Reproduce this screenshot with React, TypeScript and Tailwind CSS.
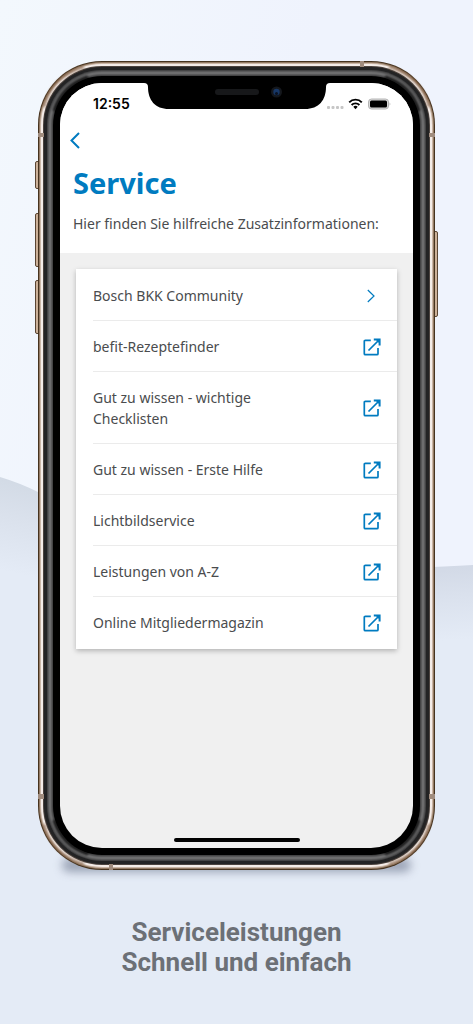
import { useState } from 'react';
import clsx from 'clsx';

interface ServiceEntry { label: string; external: boolean; }

const entries: ServiceEntry[] = [
  { label: 'Bosch BKK Community', external: false },
  { label: 'befit-Rezeptefinder', external: true },
  { label: 'Gut zu wissen - wichtige Checklisten', external: true },
  { label: 'Gut zu wissen - Erste Hilfe', external: true },
  { label: 'Lichtbildservice', external: true },
  { label: 'Leistungen von A-Z', external: true },
  { label: 'Online Mitgliedermagazin', external: true },
];

// rings of the phone body from the outside in
const rings = [
  { inset: 0, radius: 64, fill: '#46331f' },
  { inset: 1, radius: 63, fill: '#937a64' },
  { inset: 2, radius: 62, fill: '#c9b5a5' },
  { inset: 3, radius: 61, fill: '#f4ece8' },
  { inset: 5, radius: 59, fill: '#4a423e' },
  { inset: 6, radius: 58, fill: '#232324' },
  { inset: 9, radius: 55, fill: '#444445' },
  { inset: 10, radius: 54, fill: '#5a5a5b' },
  { inset: 11, radius: 53, fill: '#6d6d6e' },
  { inset: 13, radius: 51, fill: '#585859' },
  { inset: 14, radius: 50, fill: '#444445' },
  { inset: 15, radius: 49, fill: '#000' },
];

function Backdrop() {
  return (
    <svg className="absolute inset-0 w-full h-full" viewBox="0 0 473 1024" preserveAspectRatio="none" aria-hidden="true">
      <defs>
        <linearGradient id="sky" x1="0" y1="0" x2="1" y2="0.6">
          <stop offset="0" stopColor="#f3f8fd" />
          <stop offset="0.5" stopColor="#eff3fd" />
          <stop offset="1" stopColor="#eff3fd" />
        </linearGradient>
        <linearGradient id="waveLeft" gradientUnits="userSpaceOnUse" x1="20" y1="480" x2="0" y2="570">
          <stop offset="0" stopColor="#d2dae5" />
          <stop offset="0.4" stopColor="#dae1ec" />
          <stop offset="1" stopColor="#e4ebf6" />
        </linearGradient>
        <linearGradient id="waveRight" gradientUnits="userSpaceOnUse" x1="450" y1="566" x2="455" y2="640">
          <stop offset="0" stopColor="#d2d9e6" />
          <stop offset="0.4" stopColor="#dae1ed" />
          <stop offset="1" stopColor="#e4ebf6" />
        </linearGradient>
      </defs>
      <rect width="473" height="1024" fill="url(#sky)" />
      <path d="M0 477Q20 483 38 492L236 560V1024H0Z" fill="url(#waveLeft)" />
      <path d="M236 568Q400 570 473 565V1024H236Z" fill="url(#waveRight)" />
    </svg>
  );
}

function PhoneBody() {
  return (
    <svg className="absolute inset-0 w-full h-full overflow-visible" viewBox="0 0 397 809" aria-hidden="true">
      <defs>
        <filter id="soft" x="-20%" y="-200%" width="140%" height="500%">
          <feGaussianBlur stdDeviation="5" />
        </filter>
        <filter id="glow" x="-20%" y="-20%" width="140%" height="140%">
          <feGaussianBlur stdDeviation="1" />
        </filter>
      </defs>
      <rect x="24" y="797" width="349" height="14" rx="7" fill="#5d6880" opacity="0.55" filter="url(#soft)" />
      <g fill="#cdb29a" stroke="#5b4634">
        <rect x="-2.500" y="100.500" width="5" height="27" rx="1.500" />
        <rect x="-2.500" y="152.500" width="5" height="53" rx="1.500" />
        <rect x="-2.500" y="219.500" width="5" height="53" rx="1.500" />
        <rect x="394.500" y="170.500" width="5" height="85" rx="1.500" />
      </g>
      {rings.map(r => (
        <rect
          key={r.inset}
          x={r.inset}
          y={r.inset}
          width={397 - r.inset * 2}
          height={809 - r.inset * 2}
          rx={r.radius}
          fill={r.fill}
        />
      ))}
      {/* darker gold and fading reflections where the body bends */}
      <g fill="none" stroke="#7a573c" strokeWidth="2.500" opacity="0.65" filter="url(#glow)">
        <path d="M6 46Q13 16 46 6" />
        <path d="M351 6Q384 16 391 46" />
        <path d="M6 763Q13 793 46 803" />
        <path d="M351 803Q384 793 391 763" />
      </g>
      <g fill="none" stroke="#000" strokeWidth="4" opacity="0.6" filter="url(#glow)">
        <path d="M16 50Q24 24 50 16" />
        <path d="M347 16Q373 24 381 50" />
        <path d="M16 759Q24 785 50 793" />
        <path d="M347 793Q373 785 381 759" />
      </g>
      <g fill="#a08c7e">
        <rect x="0" y="72" width="6" height="4" />
        <rect x="391" y="72" width="6" height="4" />
        <rect x="0" y="733" width="6" height="5" />
        <rect x="391" y="733" width="6" height="5" />
        <rect x="322" y="0" width="4" height="6" />
        <rect x="71" y="803" width="4" height="6" />
      </g>
    </svg>
  );
}

function Notch() {
  return (
    <svg className="absolute inset-x-0 top-0 mx-auto w-[186px] h-[26px]" viewBox="0 0 186 26" aria-hidden="true">
      <path d="M0 0Q4 0 4 4C4 17 11 26 25 26H161C175 26 182 17 182 4Q182 0 186 0Z" fill="#000" />
      <rect x="71" y="6" width="44" height="6" rx="3" fill="#17181a" />
      <circle cx="132.500" cy="9" r="5.500" fill="#14171c" />
      <circle cx="132.500" cy="9" r="3.200" fill="#173766" />
      <circle cx="132.500" cy="10.500" r="1.500" fill="#0a1222" />
    </svg>
  );
}

function StatusIcons() {
  return (
    <svg className="w-[64px] h-[14px]" viewBox="0 0 64 14" aria-hidden="true">
      <g fill="#c6c6c6">
        <rect x="0" y="9" width="3" height="3" rx="1" />
        <rect x="4.500" y="9" width="3" height="3" rx="1" />
        <rect x="9" y="9" width="3" height="3" rx="1" />
        <rect x="13.500" y="9" width="3" height="3" rx="1" />
      </g>
      <g fill="none" stroke="#000" strokeWidth="1.900">
        <path d="M22.200 5.400A8.600 8.600 0 0 1 34.800 5.400" />
        <path d="M24.600 8A5.400 5.400 0 0 1 32.400 8" />
      </g>
      <path d="M26.300 9.800A3.200 3.200 0 0 1 30.700 9.800L28.500 12.200Z" fill="#000" />
      <rect x="41.500" y="2" width="20" height="10" rx="3" fill="#d8d8d8" stroke="#b4b4b4" />
      <rect x="43" y="3.500" width="17" height="7" rx="1.500" fill="#000" />
      <path d="M62.700 5.200Q64 7 62.700 8.800Z" fill="#999" />
    </svg>
  );
}

function ExternalIcon() {
  return (
    <svg className="w-[18px] h-[18px]" viewBox="0 0 18 18" fill="none" stroke="#007bc0" strokeWidth="1.700" aria-hidden="true">
      <path d="M7.800 2.300H2.300Q1.300 2.300 1.300 3.300V15.700Q1.300 16.700 2.300 16.700H14Q15 16.700 15 15.700V10" />
      <path d="M5.500 12.500L16 2" />
      <path d="M10.800 1.600H16.600V7.400" strokeWidth="2" />
      <path d="M12.500 1.400H16.800V5.700Z" fill="#007bc0" stroke="none" />
    </svg>
  );
}

function ChevronIcon() {
  return (
    <svg className="w-[18px] h-[18px]" viewBox="0 0 18 18" fill="none" stroke="#007bc0" strokeWidth="1.200" aria-hidden="true">
      <path d="M4.800 3L11 9L4.800 15" />
    </svg>
  );
}

function ServiceList() {
  const [active, setActive] = useState<number | null>(null);

  return (
    <ul className="bg-white py-px shadow-[0_2px_5px_rgba(0,0,0,0.25)]">
      {entries.map((entry, i) => (
        <li key={entry.label} className="pl-[17px]">
          <a
            href="#"
            onClick={e => { e.preventDefault(); setActive(i); }}
            aria-current={active === i ? 'true' : undefined}
            className={clsx(
              'flex items-center justify-between pr-4 pt-[15px]',
              i < entries.length - 1 ? 'pb-[14px] border-b border-[#ebebeb]' : 'pb-[15px]',
            )}
          >
            <span className="max-w-[200px] text-[14px] leading-[21px]">{entry.label}</span>
            {entry.external ? <ExternalIcon /> : <ChevronIcon />}
          </a>
        </li>
      ))}
    </ul>
  );
}

function Screen() {
  return (
    <div className="relative h-full flex flex-col rounded-[42px] overflow-hidden bg-[#f0f0f0] text-[#4a4c4e] font-['Noto_Sans',sans-serif]">
      <header className="flex flex-col items-start bg-white px-[13px] pb-[18px]">
        <div className="self-stretch flex items-center justify-between pt-[13px] pl-5 pr-[9px] h-[28px] text-black">
          <span className="font-['Inter',sans-serif] font-semibold text-[14px] leading-[14px]">12:55</span>
          <StatusIcons />
        </div>
        <button aria-label="Zurück" className="-ml-[5px] mt-5">
          <svg className="w-[14px] h-[18px]" viewBox="0 0 14 18" fill="none" stroke="#007bc0" strokeWidth="2" aria-hidden="true">
            <path d="M11 2L3.500 9.500L11 17" />
          </svg>
        </button>
        <h1 className="mt-4 text-[29px] leading-[36px] font-bold text-[#007bc0]">Service</h1>
        <p className="mt-3 text-[14px] leading-[22px] whitespace-nowrap">Hier finden Sie hilfreiche Zusatzinformationen:</p>
      </header>
      <main className="flex-1 px-4 pt-4">
        <ServiceList />
      </main>
      <div className="mx-auto mb-[6px] w-[126px] h-1 rounded-full bg-black" />
      <Notch />
    </div>
  );
}

export default function App() {
  return (
    <div className="relative min-h-screen overflow-hidden bg-[#e4ebf6]">
      <Backdrop />
      <div className="relative flex flex-col px-[38px] pt-[61px]">
        <div className="relative aspect-[397/809] p-[22px]">
          <PhoneBody />
          <Screen />
        </div>
        <h2 className="mt-[47px] text-center font-['Roboto',sans-serif] font-bold text-[26px] leading-[30px] text-[#6c7076]">
          Serviceleistungen<br />Schnell und einfach
        </h2>
      </div>
    </div>
  );
}
